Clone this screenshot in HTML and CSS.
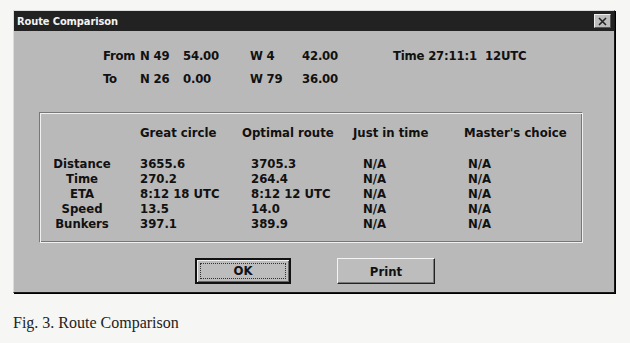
FILE: index.html
```html
<!DOCTYPE html>
<html lang="en">
<head>
    <meta charset="UTF-8">
    <title>Route Comparison</title>
    <link rel="stylesheet" href="styles.css">
</head>
<body>
    <div class="window">
        <div class="titlebar">
            <span class="title">Route Comparison</span>
            <span class="close">
                <svg width="11" height="9" viewBox="0 0 11 9"><path d="M2 1 L9 8 M9 1 L2 8" stroke="#222" stroke-width="1.6"/></svg>
            </span>
        </div>
        <div class="content">
            <div class="coords">
                <span>From</span><span>N 49</span><span>54.00</span><span>W 4</span><span>42.00</span><span>Time 27:11:1</span><span>12UTC</span>
                <span>To</span><span>N 26</span><span>0.00</span><span>W 79</span><span>36.00</span><span></span><span></span>
            </div>
            <div class="group">
                <div class="heads">
                    <span></span><span>Great circle</span><span>Optimal route</span><span>Just in time</span><span>Master's choice</span>
                </div>
                <div class="rows">
                    <span class="label">Distance</span><span>3655.6</span><span>3705.3</span><span>N/A</span><span>N/A</span>
                    <span class="label">Time</span><span>270.2</span><span>264.4</span><span>N/A</span><span>N/A</span>
                    <span class="label">ETA</span><span>8:12 18 UTC</span><span>8:12 12 UTC</span><span>N/A</span><span>N/A</span>
                    <span class="label">Speed</span><span>13.5</span><span>14.0</span><span>N/A</span><span>N/A</span>
                    <span class="label">Bunkers</span><span>397.1</span><span>389.9</span><span>N/A</span><span>N/A</span>
                </div>
            </div>
            <div class="buttons">
                <button class="btn btn-default"><span>OK</span></button>
                <button class="btn">Print</button>
            </div>
        </div>
    </div>
    <p class="caption">Fig. 3. Route Comparison</p>
</body>
</html>
```
FILE: styles.css
```css
body {
    margin: 0;
    padding: 10px 0 0 13px;
    background-color: #f6f6f4;
    font-family: "DejaVu Sans Condensed", "Liberation Sans", Arial, sans-serif;
    font-stretch: condensed;
    font-weight: bold;
    color: #111;
}

.window {
    width: 602px;
    height: 283px;
    background-color: #b9b9b9;
    border: 1px solid #1a1a1a;
    border-top-color: #dcdcdc;
    border-left-color: #dcdcdc;
    box-shadow: 1px 1px 0 #000;
    box-sizing: border-box;
}

.titlebar {
    height: 20px;
    background-color: #222;
    display: flex;
    align-items: center;
    justify-content: space-between;
    padding: 0 3px 0 3px;
}

.title {
    color: #f2f2f2;
    font-size: 11px;
    letter-spacing: -0.1px;
}

.close {
    width: 15px;
    height: 12px;
    background-color: #bdbdbd;
    border: 1px solid #eee;
    border-right-color: #555;
    border-bottom-color: #555;
    display: flex;
    align-items: center;
    justify-content: center;
}

.content {
    padding-top: 17px;
}

.coords {
    display: grid;
    grid-template-columns: 37px 43px 67px 52px 91px 92px auto;
    row-gap: 7px;
    padding-left: 89px;
    font-size: 13px;
    line-height: 16px;
    letter-spacing: -0.2px;
}

.group {
    margin: 25px 0 0 25px;
    width: 544px;
    height: 131px;
    border: 1px solid #777;
    border-right-color: #f0f0f0;
    border-bottom-color: #f0f0f0;
    box-shadow: inset 1px 1px 0 #f0f0f0, inset -1px -1px 0 #777;
    box-sizing: border-box;
    padding-top: 12px;
    font-size: 13px;
}

.heads {
    display: grid;
    grid-template-columns: 88px 102px 111px 111px auto;
    padding-left: 12px;
    line-height: 16px;
}

.rows {
    display: grid;
    grid-template-columns: 88px 111px 112px 105px auto;
    padding-left: 12px;
    margin-top: 15px;
    line-height: 15px;
}

.label {
    text-align: center;
    padding-right: 28px;
}

.buttons {
    display: flex;
    gap: 46px;
    margin: 15px 0 0 181px;
}

.btn {
    height: 26px;
    width: 98px;
    background-color: #bdbdbd;
    font-family: inherit;
    font-stretch: condensed;
    font-weight: bold;
    font-size: 13px;
    color: #111;
    border: 1px solid #222;
    border-top-color: #f4f4f4;
    border-left-color: #f4f4f4;
    box-shadow: inset -1px -1px 0 #7a7a7a;
    padding: 0;
}

.btn-default {
    width: 96px;
    border: 2px solid #111;
    box-shadow: inset 1px 1px 0 #eee, inset -1px -1px 0 #666;
    padding: 3px;
}

.btn-default span {
    display: block;
    height: 100%;
    border: 1px dotted #333;
    box-sizing: border-box;
    line-height: 14px;
}

.caption {
    margin: 21px 0 0 0;
    font-family: "Liberation Serif", "Times New Roman", serif;
    font-weight: normal;
    font-stretch: normal;
    font-size: 16px;
    color: #222;
}
```
